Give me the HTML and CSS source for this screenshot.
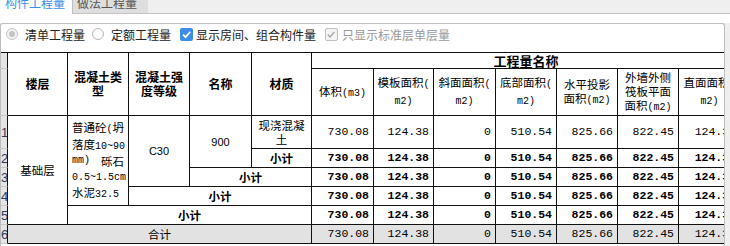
FILE: index.html
```html
<!DOCTYPE html>
<html lang="zh-CN">
<head>
    <meta charset="UTF-8">
    <title>构件工程量</title>
    <link rel="stylesheet" href="styles.css">
</head>
<body>
    <div class="tabs">
        <div class="tab active">构件工程量</div>
        <div class="tab">做法工程量</div>
        <div class="tabs-fill"></div>
    </div>

    <div class="main">
        <div class="panel">
            <div class="options">
                <label class="opt"><span class="radio checked"></span>清单工程量</label>
                <label class="opt opt-last-radio"><span class="radio"></span>定额工程量</label>
                <label class="opt opt-check">
                    <span class="check on">
                        <svg width="13" height="13" viewBox="0 0 13 13"><path d="M3 6.6 L5.5 9.1 L10.2 3.8" fill="none" stroke="#fff" stroke-width="1.8"/></svg>
                    </span>显示房间、组合构件量
                </label>
                <label class="opt opt-check disabled">
                    <span class="check off">
                        <svg width="13" height="13" viewBox="0 0 13 13"><path d="M3 6.6 L5.5 9.1 L10.2 3.8" fill="none" stroke="#a8a8a8" stroke-width="1.6"/></svg>
                    </span>只显示标准层单层量
                </label>
            </div>

            <table class="grid">
                <colgroup>
                    <col style="width:7px">
                    <col style="width:60px">
                    <col style="width:61px">
                    <col style="width:61px">
                    <col style="width:62px">
                    <col style="width:60px">
                    <col style="width:62px">
                    <col style="width:60px">
                    <col style="width:62px">
                    <col style="width:61px">
                    <col style="width:61px">
                    <col style="width:61px">
                    <col style="width:62px">
                </colgroup>
                <tr class="head-1">
                    <td class="rn"></td>
                    <th rowspan="2">楼层</th>
                    <th rowspan="2">混凝土类<br>型</th>
                    <th rowspan="2">混凝土强<br>度等级</th>
                    <th rowspan="2">名称</th>
                    <th rowspan="2">材质</th>
                    <th colspan="7" class="group">工程量名称</th>
                </tr>
                <tr class="head-2">
                    <td class="rn"></td>
                    <th class="sub">体积<span class="en">(m3)</span></th>
                    <th class="sub">模板面积<span class="en">(</span><br><span class="en">m2)</span></th>
                    <th class="sub">斜面面积<span class="en">(</span><br><span class="en">m2)</span></th>
                    <th class="sub">底部面积<span class="en">(</span><br><span class="en">m2)</span></th>
                    <th class="sub">水平投影<br>面积<span class="en">(m2)</span></th>
                    <th class="sub">外墙外侧<br>筏板平面<br>面积<span class="en">(m2)</span></th>
                    <th class="sub">直面面积<span class="en">(</span><br><span class="en">m2)</span></th>
                </tr>
                <tr class="row-first">
                    <td class="rn">1</td>
                    <td rowspan="5" class="txt">基础层</td>
                    <td rowspan="4" class="mix">
                        <span class="ln">普通砼<span class="en">(</span>坍</span>
                        <span class="ln">落度<span class="en">10~90</span></span>
                        <span class="ln spread"><span class="en">mm)</span><span>砾石</span></span>
                        <span class="ln"><span class="en">0.5~1.5cm</span></span>
                        <span class="ln">水泥<span class="en">32.5</span></span>
                    </td>
                    <td rowspan="3" class="txt code">C30</td>
                    <td rowspan="2" class="txt code">900</td>
                    <td class="txt">现浇混凝<br>土</td>
                    <td class="num">730.08</td>
                    <td class="num">124.38</td>
                    <td class="num">0</td>
                    <td class="num">510.54</td>
                    <td class="num">825.66</td>
                    <td class="num">822.45</td>
                    <td class="num">124.38</td>
                </tr>
                <tr class="row sub-total">
                    <td class="rn">2</td>
                    <td class="txt">小计</td>
                    <td class="num">730.08</td>
                    <td class="num">124.38</td>
                    <td class="num">0</td>
                    <td class="num">510.54</td>
                    <td class="num">825.66</td>
                    <td class="num">822.45</td>
                    <td class="num">124.38</td>
                </tr>
                <tr class="row sub-total">
                    <td class="rn">3</td>
                    <td colspan="2" class="txt">小计</td>
                    <td class="num">730.08</td>
                    <td class="num">124.38</td>
                    <td class="num">0</td>
                    <td class="num">510.54</td>
                    <td class="num">825.66</td>
                    <td class="num">822.45</td>
                    <td class="num">124.38</td>
                </tr>
                <tr class="row sub-total">
                    <td class="rn">4</td>
                    <td colspan="3" class="txt">小计</td>
                    <td class="num">730.08</td>
                    <td class="num">124.38</td>
                    <td class="num">0</td>
                    <td class="num">510.54</td>
                    <td class="num">825.66</td>
                    <td class="num">822.45</td>
                    <td class="num">124.38</td>
                </tr>
                <tr class="row sub-total">
                    <td class="rn">5</td>
                    <td colspan="4" class="txt">小计</td>
                    <td class="num">730.08</td>
                    <td class="num">124.38</td>
                    <td class="num">0</td>
                    <td class="num">510.54</td>
                    <td class="num">825.66</td>
                    <td class="num">822.45</td>
                    <td class="num">124.38</td>
                </tr>
                <tr class="row total">
                    <td class="rn">6</td>
                    <td colspan="5" class="txt">合计</td>
                    <td class="num">730.08</td>
                    <td class="num">124.38</td>
                    <td class="num">0</td>
                    <td class="num">510.54</td>
                    <td class="num">825.66</td>
                    <td class="num">822.45</td>
                    <td class="num">124.38</td>
                </tr>
            </table>
        </div>
    </div>
</body>
</html>
```

FILE: styles.css
```css
/* Base */
* {
    margin: 0;
    padding: 0;
    box-sizing: border-box;
}

body {
    width: 730px;
    height: 246px;
    overflow: hidden;
    background-color: #fff;
    color: #222;
    font-family: "Noto Sans CJK SC", sans-serif;
    font-size: 12px;
}

/* Tab strip */
.tabs {
    display: flex;
    align-items: flex-end;
    height: 14px;
    overflow: hidden;
    background-color: #efefef;
}

.tab {
    height: 21px;
    line-height: 20px;
    white-space: nowrap;
}

.tab.active {
    width: 72px;
    padding-left: 5px;
    background-color: #fff;
    color: #3a8ee6;
}

.tab:not(.active) {
    width: 76px;
    padding-left: 4px;
    background-color: #dedede;
    color: #555;
    border-left: 1px solid #bdbdbd;
    border-bottom: 1px solid #c4c4c4;
}

.tabs-fill {
    flex: 1;
    height: 100%;
    border-bottom: 1px solid #c4c4c4;
}

/* Main panel */
.main {
    margin-top: 9px;
    height: 223px;
    background-color: #efefef;
}

.panel {
    width: 725px;
    height: 223px;
    overflow: hidden;
    background-color: #fff;
    border: 1px solid #bdbdbd;
    border-bottom: none;
    border-radius: 3px 3px 0 0;
}

/* Options bar */
.options {
    display: flex;
    align-items: center;
    height: 20px;
    padding-left: 5px;
    white-space: nowrap;
}

.opt {
    display: flex;
    align-items: center;
    gap: 7px;
    margin-right: 7px;
}

.opt-last-radio {
    margin-right: 9px;
}

.opt-check {
    gap: 3px;
    margin-right: 9px;
}

.opt.disabled {
    color: #9a9a9a;
    gap: 4px;
}

.radio {
    width: 12px;
    height: 12px;
    border: 1px solid #b4b4b4;
    border-radius: 50%;
    background-color: #fff;
    display: flex;
    align-items: center;
    justify-content: center;
}

.radio.checked {
    border-color: #c6c6c6;
    background-color: #f3f3f3;
}

.radio.checked::after {
    content: "";
    width: 6px;
    height: 6px;
    border-radius: 50%;
    background-color: #c4c4c4;
}

.check {
    width: 13px;
    height: 13px;
    border-radius: 2px;
    display: flex;
}

.check.on {
    background-color: #3b8de6;
}

.check.off {
    background-color: #f4f4f4;
    border: 1px solid #c0c0c0;
}

.check.off svg {
    margin: -1px 0 0 -1px;
}

/* Grid */
.grid {
    margin-top: 8px;
    width: 740px;
    table-layout: fixed;
    border-collapse: separate;
    border-spacing: 0;
    font-size: 11.5px;
    line-height: 14px;
    color: #000;
}

.grid th,
.grid td {
    padding: 0;
    border-right: 1px solid #111;
    border-bottom: 1px solid #111;
    overflow: hidden;
    white-space: nowrap;
    text-align: center;
    vertical-align: middle;
}

.grid th {
    font-size: 12px;
    font-weight: bold;
}

.head-1 {
    height: 17px;
}

.head-1 th,
.head-1 td {
    border-top: 1px solid #111;
}

.head-2 {
    height: 47px;
}

.grid th.group {
    font-size: 13px;
    line-height: 15px;
}

.grid th.sub {
    font-size: 11.5px;
    font-weight: normal;
}

.en {
    font-family: "Liberation Mono", monospace;
    font-size: 10px;
}

.row-first {
    height: 33px;
}

.row {
    height: 19px;
}

/* Row number gutter */
.grid td.rn {
    background-color: #e4e4e4;
    border-bottom-color: #c8c8c8;
    color: #2a3b5c;
    font-family: "Liberation Sans", sans-serif;
    font-size: 13px;
    text-align: left;
    padding-top: 2px;
}

.txt {
    font-size: 11.5px;
}

.code {
    font-family: "Liberation Sans", sans-serif;
    font-size: 11px;
}

.grid td.mix {
    text-align: left;
    padding: 0 4px;
    line-height: 14px;
}

.ln {
    display: block;
}

.ln.spread {
    display: flex;
    align-items: center;
    justify-content: space-between;
}

.grid td.num {
    font-family: "Liberation Mono", monospace;
    font-size: 11.5px;
    text-align: right;
    padding-right: 4px;
}

.sub-total td {
    font-weight: bold;
}

.sub-total td.rn {
    font-weight: normal;
}

.total td {
    background-color: #e2e2e2;
}
```
